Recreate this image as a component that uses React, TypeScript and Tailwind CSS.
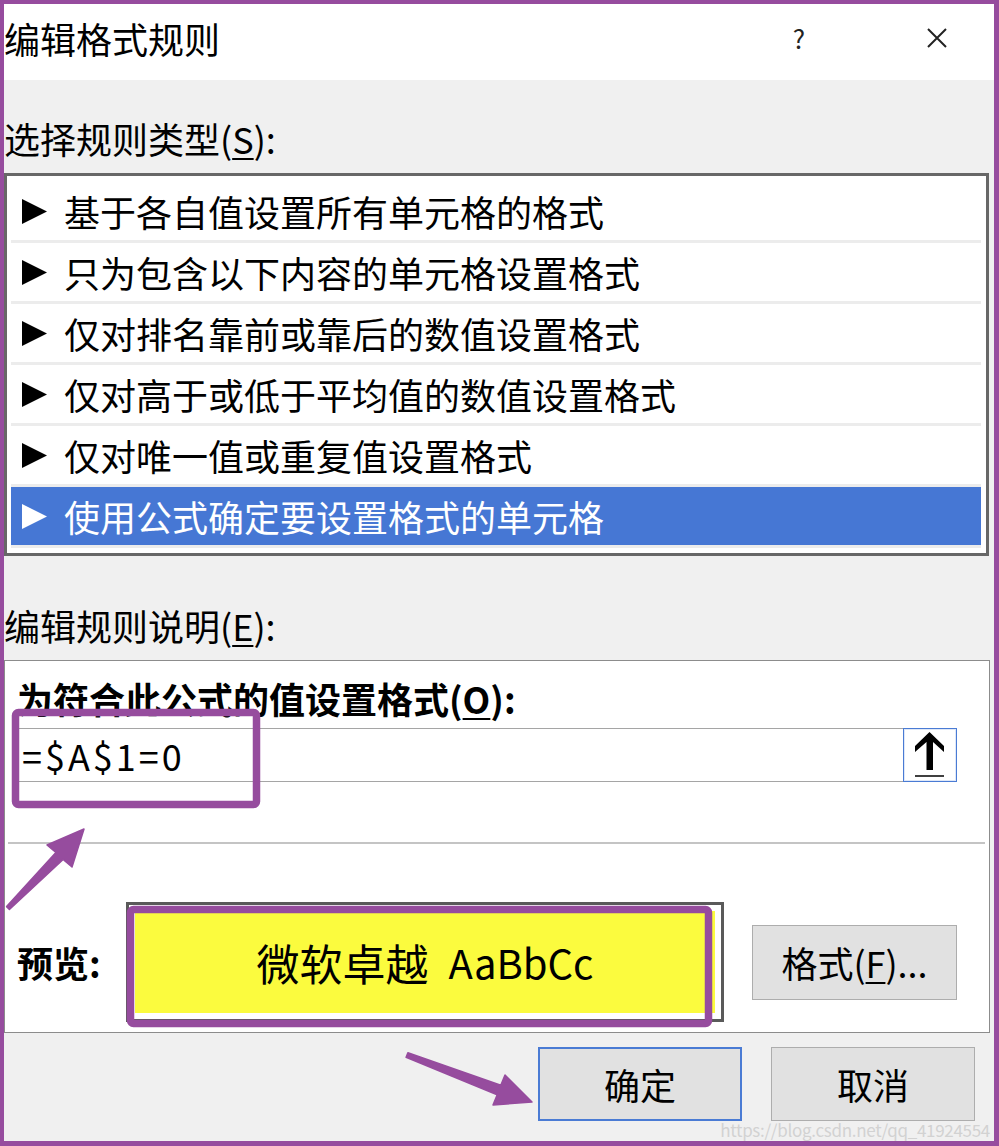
import React from "react";

const rules = [
  "基于各自值设置所有单元格的格式",
  "只为包含以下内容的单元格设置格式",
  "仅对排名靠前或靠后的数值设置格式",
  "仅对高于或低于平均值的数值设置格式",
  "仅对唯一值或重复值设置格式",
  "使用公式确定要设置格式的单元格",
];

function Triangle({ color }: { color: string }) {
  return (
    <svg width="25" height="25" viewBox="0 0 25 25" className="shrink-0">
      <polygon points="0,0 25,12.5 0,25" fill={color} />
    </svg>
  );
}

function Annotations() {
  return (
    <svg
      className="absolute left-0 top-0 pointer-events-none"
      width="999"
      height="1146"
      viewBox="0 0 999 1146"
    >
      <g fill="none" stroke="#964c9e" strokeWidth="7.5" strokeLinejoin="round">
        <rect x="15.5" y="712.5" width="241" height="92" rx="3" />
        <rect x="130.5" y="909.5" width="578" height="114" rx="3" />
      </g>
      <g fill="#964c9e" stroke="#964c9e" strokeWidth="1.5" strokeLinejoin="round">
        <polygon points="6.6,906.6 55.9,852.5 47,845 84,829 72,867 63.1,859.5 9.4,909.4" />
        <polygon points="407.9,1052.7 500.8,1085.3 505,1075 532,1102 493,1105 497.2,1094.7 406.1,1057.3" />
      </g>
    </svg>
  );
}

export default function App() {
  return (
    <div className="relative w-[999px] h-[1146px] font-['Noto_Sans_CJK_SC','Noto_Sans',sans-serif] text-black">
      <div className="w-[999px] h-[1146px] border-l-4 border-t-4 border-r-[5px] border-b-[5px] border-[#964c9e] flex flex-col">
        {/* Title bar */}
        <div className="h-[76px] bg-white flex items-center pb-[9px] shrink-0">
          <span className="flex-1 text-[36px] leading-[40px]">编辑格式规则</span>
          <span className="w-[40px] text-center text-[26px] leading-[30px] text-[#222]">?</span>
          <svg width="20" height="20" viewBox="0 0 20 20" className="ml-[108px] mr-[47px]">
            <path d="M1 1 L19 19 M19 1 L1 19" stroke="#222" strokeWidth="2" />
          </svg>
        </div>

        {/* Body */}
        <div className="flex-1 bg-[#f0f0f0] flex flex-col">
          <div className="pt-[39px] mb-[16px] text-[36px] leading-[38px]">
            选择规则类型(<span className="underline underline-offset-4 decoration-2">S</span>):
          </div>

          <div className="w-[985px] h-[383px] border-[3px] border-[#676767] bg-white pt-[6px] pl-[4px] pr-[5px]">
            {rules.map((r, i) => {
              const sel = i === rules.length - 1;
              return (
                <div
                  key={r}
                  className={
                    sel
                      ? "h-[61px] border-b-[3px] border-[#ececec] bg-[#4677d4] text-white flex items-center pl-[11px] gap-[17px]"
                      : "h-[61px] border-b-[3px] border-[#ececec] flex items-center pl-[11px] gap-[17px]"
                  }
                >
                  <Triangle color={sel ? "#ffffff" : "#000000"} />
                  <span className="text-[36px] leading-[40px]">{r}</span>
                </div>
              );
            })}
          </div>

          <div className="mt-[50px] mb-[16px] text-[36px] leading-[38px]">
            编辑规则说明(<span className="underline underline-offset-4 decoration-2">E</span>):
          </div>

          {/* Rule description panel */}
          <div className="w-[986px] h-[373px] border border-[#8c8c8c] bg-white pt-[18px] flex flex-col">
            <div className="pl-[12px] text-[36px] leading-[38px] font-bold">
              为符合此公式的值设置格式(<span className="underline underline-offset-4 decoration-2">O</span>):
            </div>

            <div className="mt-[11px] ml-[7px] w-[945px] h-[54px] flex">
              <div className="flex-1 border-y border-l border-[#a5a5a5] flex items-center pl-[9px] text-[36px] leading-[40px] tracking-[3px]">
                =$A$1=0
              </div>
              <div className="w-[54px] h-[54px] border border-[#4a7bd4] bg-white shadow-[inset_0_0_0_1px_#dfe8f8]">
                <svg width="52" height="52" viewBox="1 1 52 52">
                  <polygon
                    points="26.5,4 41,18 41,24 30,14 30,42 23.5,42 23.5,14 12,24 12,18"
                    fill="#000"
                  />
                  <line x1="12" y1="48" x2="41" y2="48" stroke="#000" strokeWidth="1.5" />
                </svg>
              </div>
            </div>

            <div className="mt-[60px] ml-[3px] w-[977px] h-[2px] bg-[#c4c4c4]" />

            <div className="mt-[58px] pl-[12px] flex items-center">
              <span className="w-[109px] shrink-0 text-[36px] leading-[40px] font-bold">预览:</span>
              <div className="w-[598px] h-[120px] border-[3px] border-[#5a5a5a] bg-white p-[6px]">
                <div className="w-full h-full bg-[#fbfb3e] flex items-center justify-center">
                  <span className="text-[43px] leading-[48px]">微软卓越</span>
                  <span className="ml-[20px] text-[40px] leading-[48px]">AaBbCc</span>
                </div>
              </div>
              <div className="ml-[28px] w-[205px] h-[75px] bg-[#e1e1e1] border border-[#adadad] flex items-center justify-center text-[36px] leading-[40px]">
                格式(<span className="underline underline-offset-4 decoration-2">F</span>)...
              </div>
            </div>
          </div>

          {/* Footer buttons */}
          <div className="mt-[14px] pr-[19px] flex justify-end gap-[29px]">
            <div className="w-[204px] h-[74px] bg-[#e1e1e1] border-2 border-[#4a7bd4] flex items-center justify-center text-[36px] leading-[40px]">
              确定
            </div>
            <div className="w-[204px] h-[74px] bg-[#e1e1e1] border border-[#adadad] flex items-center justify-center text-[36px] leading-[40px]">
              取消
            </div>
          </div>
        </div>
      </div>

      <span className="absolute right-[9px] bottom-[6px] text-[17px] leading-[20px] text-[#d2d2d2] tracking-[-0.3px]">
        https://blog.csdn.net/qq_41924554
      </span>

      <Annotations />
    </div>
  );
}
